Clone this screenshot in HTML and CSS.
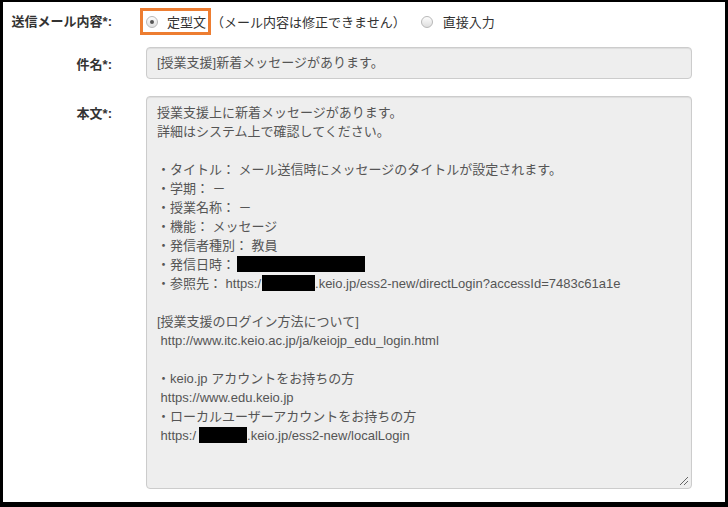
FILE: index.html
```html
<!DOCTYPE html>
<html>

<head>
    <title>送信メール内容</title>
    <link rel="stylesheet" href="styles.css">
</head>

<body>
    <div class="frame">
        <!-- 送信メール内容 -->
        <div class="form-row row-mail">
            <div class="form-label">送信メール内容*:</div>
            <div class="radio-group">
                <span class="highlight">
                    <span class="radio checked"></span>定型文
                </span>
                <span class="radio-note">（メール内容は修正できません）</span>
                <span class="radio radio-second"></span>直接入力
            </div>
        </div>

        <!-- 件名 -->
        <div class="form-row row-subject">
            <div class="form-label">件名*:</div>
            <div class="subject-box">[授業支援]新着メッセージがあります。</div>
        </div>

        <!-- 本文 -->
        <div class="form-row row-body">
            <div class="form-label">本文*:</div>
            <div class="body-box">授業支援上に新着メッセージがあります。
詳細はシステム上で確認してください。

・タイトル： メール送信時にメッセージのタイトルが設定されます。
・学期： －
・授業名称： －
・機能： メッセージ
・発信者種別： 教員
・発信日時：<span class="redact redact-date"></span>
・参照先： https:/<span class="redact redact-host"></span>.keio.jp/ess2-new/directLogin?accessId=7483c61a1e

[授業支援のログイン方法について]
 http://www.itc.keio.ac.jp/ja/keiojp_edu_login.html

・keio.jp アカウントをお持ちの方
 https://www.edu.keio.jp
・ローカルユーザーアカウントをお持ちの方
 https:/<span class="redact redact-local"></span>.keio.jp/ess2-new/localLogin
<svg class="grip" width="10" height="10" viewBox="0 0 10 10"><path d="M9 1 L1 9 M9 5 L5 9" stroke="#666" stroke-width="1" fill="none"/></svg></div>
        </div>
    </div>
</body>

</html>
```

FILE: styles.css
```css
/* Page */
body {
    margin: 0;
    font-family: "Liberation Sans", "Noto Sans CJK JP", sans-serif;
    font-size: 13px;
    color: #333;
}

/* Black frame around the screenshot */
.frame {
    box-sizing: border-box;
    width: 728px;
    height: 507px;
    border: solid #000;
    border-width: 2px 3px 5px 3px;
    background: #fff;
    overflow: hidden;
}

/* Form rows: label column + field column */
.form-row {
    display: grid;
    grid-template-columns: 109px 546px;
    column-gap: 34px;
}

.row-mail {
    margin-top: 6px;
    align-items: center;
}

.row-subject {
    margin-top: 12px;
}

.row-body {
    margin-top: 17px;
}

.form-label {
    text-align: right;
    font-weight: bold;
    line-height: 19px;
}

.row-subject .form-label,
.row-body .form-label {
    padding-top: 8px;
}

/* Radio buttons */
.radio-group {
    display: flex;
    align-items: center;
    height: 27px;
    color: #333;
}

.highlight {
    display: flex;
    align-items: center;
    box-sizing: border-box;
    height: 27px;
    margin-left: -6px;
    padding: 0 2px 0 3px;
    border: 3px solid #ed7d31;
}

.radio {
    position: relative;
    display: inline-block;
    box-sizing: border-box;
    width: 12px;
    height: 12px;
    margin-right: 9px;
    border: 1px solid #b8b8b8;
    border-radius: 50%;
    background: linear-gradient(#fdfdfd, #dedede);
}

.radio.checked::after {
    content: "";
    position: absolute;
    top: 3px;
    left: 3px;
    width: 4px;
    height: 4px;
    border-radius: 50%;
    background: #555;
}

.radio-second {
    margin-left: 15px;
    margin-right: 10px;
}

/* Read-only fields */
.subject-box,
.body-box {
    box-sizing: border-box;
    border: 1px solid #ccc;
    border-radius: 4px;
    background: #eee;
    color: #555;
    box-shadow: inset 0 1px 1px rgba(0, 0, 0, 0.075);
}

.subject-box {
    height: 32px;
    padding: 0 10px;
    line-height: 30px;
}

.body-box {
    position: relative;
    height: 393px;
    padding: 6px 10px;
    line-height: 19px;
    white-space: pre;
    overflow: hidden;
}

/* Blacked-out parts */
.redact {
    display: inline-block;
    height: 16px;
    vertical-align: -3px;
    background: #000;
}

.redact-date {
    width: 128px;
    margin-left: 2px;
}

.redact-host {
    width: 53px;
    margin-left: 1px;
}

.redact-local {
    width: 48px;
    margin-left: 3px;
}

/* Resize handle */
.grip {
    position: absolute;
    right: 2px;
    bottom: 2px;
}
```
